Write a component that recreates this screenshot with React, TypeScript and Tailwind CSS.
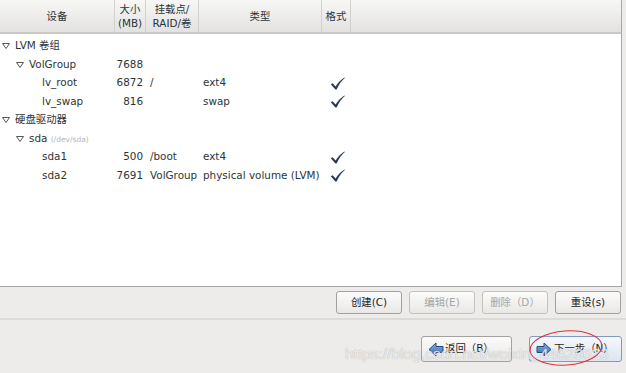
import React from "react";

const FONT = { fontFamily: '"DejaVu Sans", "Noto Sans CJK SC", sans-serif' };

function Tri() {
  return (
    <svg width="8" height="6" viewBox="0 0 8 6" className="shrink-0">
      <polygon points="0.5,0.5 7.5,0.5 4,5.5" fill="none" stroke="#555753" strokeWidth="1" />
    </svg>
  );
}

function Check() {
  return (
    <svg width="15" height="13" viewBox="0 0 15 13">
      <path
        d="M0.8,7.2 L2.6,6.2 L5.6,9.6 C7.8,5.8 10.6,2.8 14.4,0.4 L14.8,0.9 C11.6,3.6 8.9,7.2 6.6,12.4 L5.4,12.4 Z"
        fill="#2a3a52"
      />
    </svg>
  );
}

type Row = {
  level: number;
  tri?: boolean;
  name: React.ReactNode;
  size?: string;
  mount?: string;
  type?: string;
  fmt?: boolean;
};

const rows: Row[] = [
  { level: 0, tri: true, name: "LVM 卷组" },
  { level: 1, tri: true, name: "VolGroup", size: "7688" },
  { level: 2, name: "lv_root", size: "6872", mount: "/", type: "ext4", fmt: true },
  { level: 2, name: "lv_swap", size: "816", type: "swap", fmt: true },
  { level: 0, tri: true, name: "硬盘驱动器" },
  {
    level: 1,
    tri: true,
    name: (
      <span>
        sda <span className="text-[7.5px] text-[#b5b5b5]">(/dev/sda)</span>
      </span>
    ),
  },
  { level: 2, name: "sda1", size: "500", mount: "/boot", type: "ext4", fmt: true },
  { level: 2, name: "sda2", size: "7691", mount: "VolGroup", type: "physical volume (LVM)", fmt: true },
];

function Btn({ children, disabled }: { children: React.ReactNode; disabled?: boolean }) {
  return (
    <div
      className={`w-[66px] h-[23px] rounded-[3px] border flex items-center justify-center text-[10.4px] bg-gradient-to-b from-[#fbfbfa] to-[#e9e8e6] ${
        disabled ? "border-[#c4c2bf] text-[#a6a6a6]" : "border-[#a3a19d] text-[#1e1e1e]"
      }`}
    >
      {children}
    </div>
  );
}

function Arrow({ dir }: { dir: "left" | "right" }) {
  const pts =
    dir === "left"
      ? "1,7.5 8,1 8,4.5 15,4.5 15,10.5 8,10.5 8,14"
      : "15,7.5 8,1 8,4.5 1,4.5 1,10.5 8,10.5 8,14";
  return (
    <svg width="16" height="15" viewBox="0 0 16 15" className="shrink-0">
      <defs>
        <linearGradient id={`g${dir}`} x1="0" y1="0" x2="0" y2="1">
          <stop offset="0" stopColor="#8cb4e4" />
          <stop offset="1" stopColor="#3465a4" />
        </linearGradient>
      </defs>
      <polygon points={pts} fill={`url(#g${dir})`} stroke="#204a87" strokeWidth="1" strokeLinejoin="round" />
    </svg>
  );
}

export default function App() {
  return (
    <div className="relative w-[626px] h-[373px] overflow-hidden bg-[#edecea] flex flex-col text-[#2e3436]" style={FONT}>
      {/* table */}
      <div className="w-[622px] h-[287px] bg-white border-r border-b border-[#a9a7a3] flex flex-col">
        <div className="h-[34px] flex bg-gradient-to-b from-[#f7f7f6] to-[#e3e2e0] border-b-2 border-[#cbc9c6] text-[10.4px] leading-[14px]">
          <div className="w-[115px] flex items-center justify-center border-r border-[#d3d1ce]">设备</div>
          <div className="w-[31px] flex flex-col items-center justify-center border-r border-[#d3d1ce]">
            <span>大小</span>
            <span>(MB)</span>
          </div>
          <div className="w-[53px] flex flex-col items-center justify-center border-r border-[#d3d1ce]">
            <span>挂载点/</span>
            <span>RAID/卷</span>
          </div>
          <div className="w-[123px] flex items-center justify-center border-r border-[#d3d1ce]">类型</div>
          <div className="w-[29px] flex items-center justify-center border-r border-[#d3d1ce]">格式</div>
          <div className="flex-1" />
        </div>
        <div className="pt-[3px] text-[10.4px]">
          {rows.map((r, i) => (
            <div key={i} className="h-[18.5px] flex items-center">
              <div
                className="w-[115px] flex items-center gap-[5px]"
                style={{ paddingLeft: r.level === 0 ? 2 : r.level === 1 ? 16 : 42 }}
              >
                {r.tri && <Tri />}
                <span>{r.name}</span>
              </div>
              <div className="w-[31px] text-right pr-[3px]">{r.size}</div>
              <div className="w-[53px] pl-[4px]">{r.mount}</div>
              <div className="w-[123px] pl-[4px] whitespace-nowrap">{r.type}</div>
              <div className="w-[29px] flex justify-center pl-[1px]">{r.fmt ? <Check /> : null}</div>
            </div>
          ))}
        </div>
      </div>
      {/* action buttons */}
      <div className="h-[33px] flex items-center justify-end gap-[7px] pr-[5px] border-b-2 border-[#dddbd8]">
        <Btn>创建(C)</Btn>
        <Btn disabled>编辑(E)</Btn>
        <Btn disabled>删除（D）</Btn>
        <Btn>重设(s)</Btn>
      </div>
      {/* nav */}
      <div className="flex-1 flex items-start justify-end gap-[17px] pt-[16px] pr-[4px]">
        <div className="w-[91px] h-[26px] rounded-[3px] border border-[#a3a19d] bg-gradient-to-b from-[#fbfbfa] to-[#e9e8e6] flex items-center pl-[6px] gap-[1px] text-[10.4px] text-[#1e1e1e]">
          <Arrow dir="left" />
          <span>返回（B）</span>
        </div>
        <div className="w-[93px] h-[26px] rounded-[3px] border border-[#7d9ac4] bg-gradient-to-b from-[#f6f8fb] to-[#dde5f0] flex items-center pl-[6px] gap-[2px] text-[10.4px] text-[#1e1e1e]">
          <Arrow dir="right" />
          <span>下一步（N）</span>
        </div>
      </div>
      {/* watermark */}
      <div
        className="absolute left-[345px] top-[342px] text-[15.5px] text-white/75 whitespace-nowrap pointer-events-none"
        style={{ fontFamily: '"Liberation Sans", Arial, sans-serif', textShadow: "0 0 1px rgba(140,140,140,0.8)" }}
      >
        https://blog.csdn.net/weixin_44628623
      </div>
      {/* red ellipse */}
      <svg className="absolute left-[520px] top-[324px] pointer-events-none" width="92" height="48" viewBox="0 0 92 48">
        <ellipse cx="46" cy="24" rx="36" ry="17" fill="none" stroke="#e0303a" strokeWidth="1" transform="rotate(-4 46 24)" />
      </svg>
    </div>
  );
}
